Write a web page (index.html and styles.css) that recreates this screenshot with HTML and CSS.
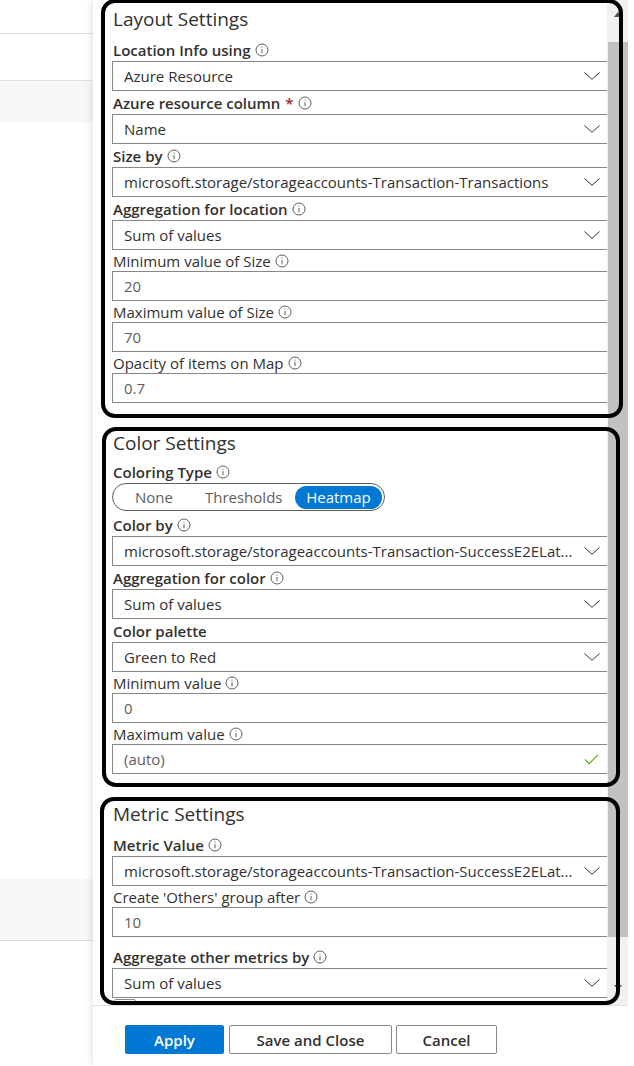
FILE: index.html
```html
<!DOCTYPE html>
<html lang="en">
<head>
<meta charset="utf-8">
<title>Map Settings</title>
<link rel="stylesheet" href="styles.css">
</head>
<body>
<div class="screen">
  <div class="backdrop">
    <div class="bd-row bd-first"></div>
    <div class="bd-row bd-second"></div>
    <div class="bd-band"></div>
    <div class="bd-spacer"></div>
    <div class="bd-band bd-band-low"></div>
  </div>

  <div class="panel">
    <div class="panel-main">
      <div class="content">

        <section class="group group-first">
          <h2 class="group-title">Layout Settings</h2>
          <div class="label dd">Location Info using<svg class="info" viewBox="0 0 14 14"><circle cx="7" cy="7" r="6"/><line x1="7" y1="6" x2="7" y2="10.2"/><circle class="dot" cx="7" cy="4.1" r="0.6"/></svg></div>
          <div class="input select"><span class="value">Azure Resource</span><svg class="chev" viewBox="0 0 16 8"><polyline points="0.5,0.5 8,7.3 15.5,0.5"/></svg></div>
          <div class="label dd">Azure resource column<span class="req">*</span><svg class="info" viewBox="0 0 14 14"><circle cx="7" cy="7" r="6"/><line x1="7" y1="6" x2="7" y2="10.2"/><circle class="dot" cx="7" cy="4.1" r="0.6"/></svg></div>
          <div class="input select"><span class="value">Name</span><svg class="chev" viewBox="0 0 16 8"><polyline points="0.5,0.5 8,7.3 15.5,0.5"/></svg></div>
          <div class="label dd">Size by<svg class="info" viewBox="0 0 14 14"><circle cx="7" cy="7" r="6"/><line x1="7" y1="6" x2="7" y2="10.2"/><circle class="dot" cx="7" cy="4.1" r="0.6"/></svg></div>
          <div class="input select"><span class="value">microsoft.storage/storageaccounts-Transaction-Transactions</span><svg class="chev" viewBox="0 0 16 8"><polyline points="0.5,0.5 8,7.3 15.5,0.5"/></svg></div>
          <div class="label dd">Aggregation for location<svg class="info" viewBox="0 0 14 14"><circle cx="7" cy="7" r="6"/><line x1="7" y1="6" x2="7" y2="10.2"/><circle class="dot" cx="7" cy="4.1" r="0.6"/></svg></div>
          <div class="input select"><span class="value">Sum of values</span><svg class="chev" viewBox="0 0 16 8"><polyline points="0.5,0.5 8,7.3 15.5,0.5"/></svg></div>
          <div class="label tf">Minimum value of Size<svg class="info" viewBox="0 0 14 14"><circle cx="7" cy="7" r="6"/><line x1="7" y1="6" x2="7" y2="10.2"/><circle class="dot" cx="7" cy="4.1" r="0.6"/></svg></div>
          <div class="input text"><span class="value">20</span></div>
          <div class="label tf">Maximum value of Size<svg class="info" viewBox="0 0 14 14"><circle cx="7" cy="7" r="6"/><line x1="7" y1="6" x2="7" y2="10.2"/><circle class="dot" cx="7" cy="4.1" r="0.6"/></svg></div>
          <div class="input text"><span class="value">70</span></div>
          <div class="label tf">Opacity of items on Map<svg class="info" viewBox="0 0 14 14"><circle cx="7" cy="7" r="6"/><line x1="7" y1="6" x2="7" y2="10.2"/><circle class="dot" cx="7" cy="4.1" r="0.6"/></svg></div>
          <div class="input text"><span class="value">0.7</span></div>
        </section>

        <section class="group">
          <h2 class="group-title">Color Settings</h2>
          <div class="label dd label-tight">Coloring Type<svg class="info" viewBox="0 0 14 14"><circle cx="7" cy="7" r="6"/><line x1="7" y1="6" x2="7" y2="10.2"/><circle class="dot" cx="7" cy="4.1" r="0.6"/></svg></div>
          <div class="toggle">
            <span class="opt opt-none">None</span>
            <span class="opt opt-thr">Thresholds</span>
            <span class="opt opt-on">Heatmap</span>
          </div>
          <div class="label dd">Color by<svg class="info" viewBox="0 0 14 14"><circle cx="7" cy="7" r="6"/><line x1="7" y1="6" x2="7" y2="10.2"/><circle class="dot" cx="7" cy="4.1" r="0.6"/></svg></div>
          <div class="input select"><span class="value">microsoft.storage/storageaccounts-Transaction-SuccessE2ELat...</span><svg class="chev" viewBox="0 0 16 8"><polyline points="0.5,0.5 8,7.3 15.5,0.5"/></svg></div>
          <div class="label dd">Aggregation for color<svg class="info" viewBox="0 0 14 14"><circle cx="7" cy="7" r="6"/><line x1="7" y1="6" x2="7" y2="10.2"/><circle class="dot" cx="7" cy="4.1" r="0.6"/></svg></div>
          <div class="input select"><span class="value">Sum of values</span><svg class="chev" viewBox="0 0 16 8"><polyline points="0.5,0.5 8,7.3 15.5,0.5"/></svg></div>
          <div class="label dd">Color palette</div>
          <div class="input select"><span class="value">Green to Red</span><svg class="chev" viewBox="0 0 16 8"><polyline points="0.5,0.5 8,7.3 15.5,0.5"/></svg></div>
          <div class="label tf">Minimum value<svg class="info" viewBox="0 0 14 14"><circle cx="7" cy="7" r="6"/><line x1="7" y1="6" x2="7" y2="10.2"/><circle class="dot" cx="7" cy="4.1" r="0.6"/></svg></div>
          <div class="input text"><span class="value">0</span></div>
          <div class="label tf">Maximum value<svg class="info" viewBox="0 0 14 14"><circle cx="7" cy="7" r="6"/><line x1="7" y1="6" x2="7" y2="10.2"/><circle class="dot" cx="7" cy="4.1" r="0.6"/></svg></div>
          <div class="input text"><span class="value">(auto)</span><svg class="check" viewBox="0 0 16 12"><polyline points="1,6 5.5,10.5 15,1"/></svg></div>
        </section>

        <section class="group">
          <h2 class="group-title">Metric Settings</h2>
          <div class="label dd">Metric Value<svg class="info" viewBox="0 0 14 14"><circle cx="7" cy="7" r="6"/><line x1="7" y1="6" x2="7" y2="10.2"/><circle class="dot" cx="7" cy="4.1" r="0.6"/></svg></div>
          <div class="input select"><span class="value">microsoft.storage/storageaccounts-Transaction-SuccessE2ELat...</span><svg class="chev" viewBox="0 0 16 8"><polyline points="0.5,0.5 8,7.3 15.5,0.5"/></svg></div>
          <div class="label tf">Create 'Others' group after<svg class="info" viewBox="0 0 14 14"><circle cx="7" cy="7" r="6"/><line x1="7" y1="6" x2="7" y2="10.2"/><circle class="dot" cx="7" cy="4.1" r="0.6"/></svg></div>
          <div class="input text"><span class="value">10</span></div>
          <div class="label dd label-spaced">Aggregate other metrics by<svg class="info" viewBox="0 0 14 14"><circle cx="7" cy="7" r="6"/><line x1="7" y1="6" x2="7" y2="10.2"/><circle class="dot" cx="7" cy="4.1" r="0.6"/></svg></div>
          <div class="input select"><span class="value">Sum of values</span><svg class="chev" viewBox="0 0 16 8"><polyline points="0.5,0.5 8,7.3 15.5,0.5"/></svg></div>
          <div class="checkbox"></div>
        </section>

      </div>
      <div class="scrollbar">
        <div class="sb-arrow sb-up"></div>
        <div class="sb-thumb"></div>
        <div class="sb-arrow sb-down"></div>
      </div>
    </div>
    <div class="footer">
      <button class="btn btn-primary">Apply</button>
      <button class="btn btn-save">Save and Close</button>
      <button class="btn btn-cancel">Cancel</button>
    </div>
  </div>

  <div class="mark mark-layout"></div>
  <div class="mark mark-color"></div>
  <div class="mark mark-metric"></div>
</div>
</body>
</html>
```

FILE: styles.css
```css
* { box-sizing: border-box; }

html, body {
  margin: 0;
  padding: 0;
  background: #ffffff;
}

body {
  font-family: "Open Sans", "Noto Sans", "Liberation Sans", sans-serif;
  color: #323130;
  width: 634px;
  height: 1066px;
  overflow: hidden;
}

.screen {
  position: relative;
  display: flex;
  width: 634px;
  height: 1066px;
}

/* background page behind the blade */
.backdrop {
  width: 93px;
  flex: none;
  display: flex;
  flex-direction: column;
  background: #ffffff;
}
.bd-first { height: 34px; border-bottom: 1px solid #e1e1e1; }
.bd-second { height: 47px; border-bottom: 1px solid #e1e1e1; }
.bd-band { height: 41px; background: #f7f7f7; }
.bd-spacer { height: 757px; }
.bd-band-low { height: 62px; border-bottom: 1px solid #dcdcdc; background: #f7f7f7; }

/* side panel */
.panel {
  flex: 1;
  display: flex;
  flex-direction: column;
  background: #ffffff;
  box-shadow: -2px 0 6px rgba(0, 0, 0, 0.10);
  padding-right: 6px;
}

.panel-main {
  height: 1005px;
  display: flex;
  flex: none;
}

.content {
  flex: 1;
  overflow: hidden;
  padding-left: 19px;
}

.group { margin-top: 27px; }
.group-first { margin-top: 0; padding-top: 6px; }

.group-title {
  margin: 0 0 6px 1px;
  font-size: 19px;
  font-weight: 400;
  line-height: 26px;
  height: 26px;
  color: #323130;
}

.label {
  display: flex;
  align-items: center;
  font-size: 15px;
  padding-left: 1px;
  white-space: nowrap;
}
.label.dd { height: 23px; font-weight: 600; }
.label.tf { height: 21px; font-weight: 400; }
.label-tight { margin-top: -2px; }
.label-spaced { margin-top: 8px; }

.req {
  color: #a4262c;
  margin-left: 5px;
  font-weight: 600;
}

.info {
  width: 14px;
  height: 14px;
  margin-left: 4px;
  flex: none;
  fill: none;
  stroke: #605e5c;
  stroke-width: 1;
}
.info .dot { fill: #605e5c; stroke: none; }

.input {
  height: 30px;
  border: 1px solid #8a8886;
  border-right: none;
  display: flex;
  align-items: center;
  padding: 0 6px 0 11px;
  font-size: 15px;
  white-space: nowrap;
  overflow: hidden;
}
.input .value { flex: 1; overflow: hidden; }
.input.select .value { color: #323130; }
.input.text .value { color: #605e5c; }

.chev {
  width: 16px;
  height: 8px;
  flex: none;
  fill: none;
  stroke: #323130;
  stroke-width: 1;
  margin-right: 1px;
}

.check {
  width: 15px;
  height: 11px;
  flex: none;
  fill: none;
  stroke: #57a300;
  stroke-width: 1.2;
  margin-right: 2px;
}

.toggle {
  width: 273px;
  height: 28px;
  border: 1px solid #605e5c;
  border-radius: 14px;
  display: flex;
  align-items: center;
  padding: 0 2px;
  margin-bottom: 2px;
  font-size: 15px;
}
.opt { color: #605e5c; line-height: 23px; }
.opt-none { margin-left: 20px; }
.opt-thr { margin-left: 32px; }
.opt-on {
  margin-left: auto;
  background: #0078d4;
  color: #ffffff;
  border-radius: 12px;
  height: 23px;
  width: 87px;
  text-align: center;
}

.checkbox {
  width: 22px;
  height: 20px;
  margin: 1px 0 0 2px;
  border: 1px solid #8a8886;
  border-radius: 2px;
}

/* scrollbar */
.scrollbar {
  width: 21px;
  flex: none;
  background: #f1f1f1;
  display: flex;
  flex-direction: column;
  align-items: center;
}
.sb-arrow {
  width: 0;
  height: 0;
  border-left: 4px solid transparent;
  border-right: 4px solid transparent;
}
.sb-up { margin-top: 12px; border-bottom: 5px solid #505050; }
.sb-thumb {
  margin-top: 25px;
  width: 20px;
  height: 895px;
  background: #c1c1c1;
}
.sb-down { margin-top: 48px; border-top: 5px solid #505050; }

/* footer */
.footer {
  border-top: 1px solid #e1dfdd;
  display: flex;
  padding: 19px 0 0 32px;
  gap: 5px;
}
.btn {
  height: 29px;
  border-radius: 2px;
  font-family: inherit;
  font-size: 15px;
  font-weight: 600;
  border: 1px solid #8a8886;
  background: #ffffff;
  color: #323130;
  padding: 0;
}
.btn-primary {
  width: 99px;
  background: #0078d4;
  border-color: #0078d4;
  color: #ffffff;
}
.btn-save { width: 163px; }
.btn-cancel { width: 101px; margin-left: -1px; }

/* annotation outlines drawn over the screenshot */
.mark {
  position: absolute;
  border: 4px solid #000000;
  border-radius: 14px;
  pointer-events: none;
}
.mark-layout { left: 101px; top: -1px; width: 522px; height: 419px; }
.mark-color { left: 102px; top: 427px; width: 518px; height: 360px; }
.mark-metric { left: 100px; top: 797px; width: 520px; height: 208px; }
```
